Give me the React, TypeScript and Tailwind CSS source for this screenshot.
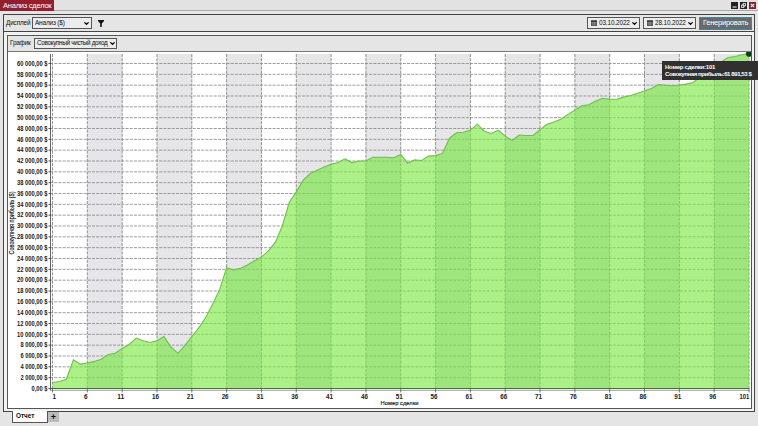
import { FiChevronDown } from "react-icons/fi";

// cumulative net profit after each trade, thousands of $
const profit = [
  1.1, 1.3, 1.7, 5.3, 4.5, 4.7, 5.0, 5.4, 6.3, 6.5, 7.4, 8.1, 9.3, 8.8, 8.5, 8.8, 9.6, 7.7, 6.5, 7.9,
  9.6, 11.2, 13.1, 15.6, 18.3, 22.3, 21.9, 22.2, 22.8, 23.6, 24.3, 25.4, 27.0, 30.0, 34.4, 36.3, 38.5, 39.7, 40.3, 40.9,
  41.4, 41.7, 42.4, 41.7, 42.0, 42.0, 42.7, 42.7, 42.7, 42.6, 43.2, 41.6, 42.2, 42.1, 42.9, 43.0, 43.4, 46.2, 47.2, 47.3,
  47.7, 48.8, 47.5, 47.1, 47.7, 46.6, 45.8, 46.8, 46.7, 46.7, 47.8, 48.8, 49.2, 49.7, 50.6, 51.4, 52.2, 52.4, 53.1, 53.6,
  53.4, 53.4, 53.8, 54.1, 54.5, 54.9, 55.4, 56.1, 56.0, 55.9, 56.0, 56.2, 56.5, 57.6, 58.6, 59.5, 60.3, 61.1, 61.3, 61.6,
  61.89,
];

const px = (trade: number) => 44.5 + (trade - 1) * 6.965;
const py = (value: number) => 336.5 - value * 5.4167;

const line = profit.map((value, i) => `${px(i + 1).toFixed(1)},${py(value).toFixed(1)}`).join(" ");
const area = `${px(1)},336.5 ${line} ${px(101)},336.5`;
const trades = Array.from({ length: 21 }, (_, i) => 1 + i * 5);
const levels = Array.from({ length: 31 }, (_, i) => i * 2);

const labelX = (trade: number) => {
  if (trade === 1) return px(1) + 1.8;
  if (trade === 101) return px(101) - 4.5;
  return px(trade) - 1.5;
};

const Chart = () => (
  <svg width="743" height="356" viewBox="0 0 743 356" className="block" fontFamily="Liberation Sans, Arial, sans-serif">
    <clipPath id="profit-area">
      <polygon points={area} />
    </clipPath>
    {trades.slice(0, -1).map((trade, i) =>
      i % 2 ? <rect key={trade} x={px(trade)} y="2" width="34.83" height="335" fill="#e6e6e8" /> : null
    )}

    {/* Grid */}
    {levels.map((level) => (
      <line key={level} x1="42" x2="741" y1={py(level)} y2={py(level)} stroke="#858585" strokeWidth="0.8" strokeDasharray="3 1.2" />
    ))}
    {trades.map((trade) => (
      <line key={trade} x1={px(trade)} x2={px(trade)} y1="2" y2="336" stroke="#858585" strokeWidth="0.9" strokeDasharray="3 1.2" />
    ))}

    {/* Profit area */}
    <polygon points={area} fill="#7fea4a" fillOpacity="0.66" />
    <g clipPath="url(#profit-area)">
      {trades.slice(0, -1).map((trade, i) =>
        i % 2 ? <rect key={trade} x={px(trade)} y="2" width="34.83" height="335" fill="#66b050" fillOpacity="0.06" /> : null
      )}
    </g>
    <polyline points={line} fill="none" stroke="#70bd4c" strokeWidth="1.1" />

    {/* Axes */}
    <path d="M42.5 2V339" stroke="#555" strokeWidth="0.9" />
    <path d="M42 336.6H741.5" stroke="#426535" strokeWidth="1" />
    <path d="M42 338.4H741.5" stroke="#aaa" strokeWidth="1" />
    {levels.map((level) => (
      <g key={level}>
        <path d={`M40.5 ${py(level)}H43`} stroke="#444" strokeWidth="0.9" />
        <text
          x="39.5"
          y={py(level) + 2.3}
          fontSize="6.5"
          fontWeight="bold"
          textAnchor="end"
          textLength={level === 0 ? 16 : level < 10 ? 27 : 30.5}
          lengthAdjust="spacingAndGlyphs"
          fill="#202020"
        >
          {level ? `${level} 000,00 $` : "0,00 $"}
        </text>
      </g>
    ))}
    {trades.map((trade) => (
      <g key={trade}>
        <path d={`M${px(trade)} 337V340.5`} stroke="#555" strokeWidth="0.8" />
        <text
          x={labelX(trade)}
          y="347"
          fontSize="6.6"
          fontWeight="bold"
          textAnchor="middle"
          textLength={trade === 101 ? 9.8 : trade < 10 ? 3.6 : 7}
          lengthAdjust="spacingAndGlyphs"
          fill="#202020"
        >
          {trade}
        </text>
      </g>
    ))}
    <text x="391.5" y="353.2" fontSize="6.2" textAnchor="middle" textLength="38" lengthAdjust="spacingAndGlyphs" fill="#111" stroke="#111" strokeWidth="0.15">
      Номер сделки
    </text>
    <text
      transform="translate(6 171) rotate(-90)"
      fontSize="6.4"
      textAnchor="middle"
      textLength="63"
      lengthAdjust="spacingAndGlyphs"
      fill="#111"
      stroke="#111"
      strokeWidth="0.15"
    >
      Совокупная прибыль ($)
    </text>
    <circle cx="741" cy="1.8" r="2.8" fill="#0a3f17" stroke="#062b0e" strokeWidth="0.5" />
  </svg>
);

const CalendarIcon = () => (
  <svg width="6" height="6" viewBox="0 0 6 6" className="shrink-0">
    <path d="M0 .5H6V6H0Z" fill="#555" />
    <path d="M.7 2.5H5.3M.7 4H5.3M2 2V5.5M4 2V5.5" stroke="#bbb" strokeWidth=".35" />
    <path d="M0 1H6" stroke="#222" />
  </svg>
);

const Arrow = () => <FiChevronDown className="ml-auto shrink-0 text-black" size={7} strokeWidth={4.5} />;

const DateField = ({ value }: { value: string }) => (
  <button className="flex h-[12px] w-[53px] items-center border border-[#555] bg-[#ececec] pr-[1px] pl-[3px]">
    <CalendarIcon />
    <span className="ml-[2px] text-[6.4px] tracking-[-0.12px] whitespace-nowrap">{value}</span>
    <Arrow />
  </button>
);

const App = () => {
  return (
    <div className="relative flex h-[426px] w-[758px] flex-col overflow-hidden bg-[#e5e5e6] font-['Liberation_Sans',Arial,sans-serif] text-[6.4px] leading-none text-[#0c0c0c]">
      {/* Title bar */}
      <header className="flex h-[11px] shrink-0 items-start border-b border-[#aaa] bg-[#e3e1e2]">
        <div className="flex h-[11px] w-[54px] items-center bg-[#921f2b] pl-[3px] text-[7.6px] tracking-[-0.28px] whitespace-nowrap text-white">
          Анализ сделок
        </div>
        <div className="mt-[2px] mr-[2px] ml-auto flex gap-[2px]">
          <svg width="7" height="7" viewBox="0 0 7 7">
            <rect width="7" height="7" fill="#222" />
            <path d="M1.5 5H5.5" stroke="#fff" />
          </svg>
          <svg width="7" height="7" viewBox="0 0 7 7">
            <rect width="7" height="7" fill="#222" />
            <path d="M3 1.5H5.5V4H3ZM1.5 3H4V5.5H1.5Z" fill="#222" stroke="#fff" strokeWidth=".8" />
          </svg>
          <svg width="7" height="7" viewBox="0 0 7 7">
            <rect width="7" height="7" fill="#811f2b" />
            <path d="M1.8 1.8L5.2 5.2M5.2 1.8L1.8 5.2" stroke="#fff" strokeWidth="1.1" />
          </svg>
        </div>
      </header>

      {/* Report */}
      <main className="mt-[3px] ml-[3px] flex h-[398px] w-[752px] shrink-0 flex-col border border-[#444] bg-[#f3f3f3]">
        <div className="flex h-[17px] shrink-0 items-center border-b border-[#444] bg-[#e5e5e6] pr-[2px] pl-[2px]">
          <span className="w-[26px] tracking-[-0.15px] whitespace-nowrap">Дисплей</span>
          <button className="flex h-[12px] w-[60px] items-center border border-[#555] bg-[#ececec] pr-[1px] pl-[2px] tracking-[-0.15px] whitespace-nowrap">
            Анализ ($)
            <Arrow />
          </button>
          <svg width="6" height="7" viewBox="0 0 6 7" className="ml-[6px]">
            <path d="M0 0H6V1L3.8 3.5V7H2.2V3.5L0 1Z" fill="#111" />
          </svg>
          <div className="ml-auto flex items-center gap-[3px]">
            <DateField value="03.10.2022" />
            <DateField value="28.10.2022" />
            <button className="flex h-[13px] w-[53px] items-center justify-center border border-[#4d8295] bg-[#666b6e] text-[7.6px] tracking-[-0.28px] whitespace-nowrap text-white">
              Генерировать
            </button>
          </div>
        </div>

        <section className="mt-[3px] ml-[3px] flex h-[374px] w-[745px] flex-col border border-[#555] bg-white">
          <div className="flex h-[16px] shrink-0 items-center border-b border-[#777] bg-[#e5e5e6] pl-[2px]">
            <span className="w-[24px] tracking-[-0.2px]">График</span>
            <button className="flex h-[11px] w-[83px] items-center border border-[#555] bg-[#ececec] pl-[2px] tracking-[-0.35px] whitespace-nowrap">
              Совокупный чистый доход
              <Arrow />
            </button>
          </div>
          <Chart />
        </section>
      </main>

      {/* Report tabs */}
      <footer className="-mt-px flex pl-[12px]">
        <div className="flex h-[12px] w-[36px] items-center border border-t-0 border-[#555] bg-white pl-[3px] text-[6.4px] font-bold">
          Отчет
        </div>
        <button className="mt-px flex h-[10px] w-[11px] items-center justify-center bg-[#bbb] text-[9px] font-bold">+</button>
      </footer>

      {/* Point tooltip */}
      <div className="absolute top-[61px] left-[662px] flex h-[19px] w-[96px] flex-col justify-center gap-[1px] bg-[#303030] pl-[3px] text-[6.1px] leading-[6px] font-bold whitespace-nowrap text-white">
        <span className="tracking-[-0.3px]">Номер сделки:101</span>
        <span className="tracking-[-0.45px]">Совокупная прибыль:61 891,53 $</span>
      </div>
    </div>
  );
};

export default App;
